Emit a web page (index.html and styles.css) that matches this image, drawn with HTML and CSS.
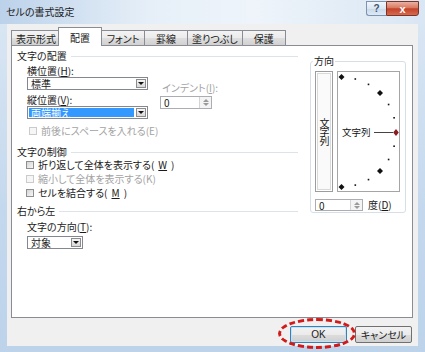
FILE: index.html
```html
<!DOCTYPE html>
<html lang="ja">
<head>
    <meta charset="UTF-8">
    <meta name="viewport" content="width=device-width, initial-scale=1.0">
    <title>セルの書式設定</title>
    <link rel="stylesheet" href="styles.css">
</head>
<body>
    <div class="window">
        <div class="titlebar">
            <span class="title">セルの書式設定</span>
            <div class="caption-buttons">
                <span class="cap-btn cap-help">?</span>
                <span class="cap-btn cap-close">x</span>
            </div>
        </div>

        <div class="client">
            <div class="tabs">
                <span class="tab">表示形式</span>
                <span class="tab active">配置</span>
                <span class="tab">フォント</span>
                <span class="tab">罫線</span>
                <span class="tab">塗りつぶし</span>
                <span class="tab">保護</span>
            </div>

            <div class="panel">
                <div class="align-col">
                    <div class="section-title">文字の配置</div>
                    <div class="align-grid">
                        <div class="align-main">
                            <div class="field-label">横位置(<u>H</u>):</div>
                            <div class="select select-wide">
                                <span class="select-value">標準</span>
                                <span class="drop-btn"></span>
                            </div>
                            <div class="field-label label-gap">縦位置(<u>V</u>):</div>
                            <div class="select select-wide focused">
                                <span class="select-value">両端揃え</span>
                                <span class="drop-btn"></span>
                            </div>
                        </div>
                        <div class="indent">
                            <div class="field-label disabled">インデント(<u>I</u>):</div>
                            <div class="spin spin-indent">
                                <span class="spin-value">0</span>
                                <span class="spin-btn"><i class="up"></i><i class="down"></i></span>
                            </div>
                        </div>
                    </div>
                    <div class="check check-space disabled"><span class="box"></span>前後にスペースを入れる(E)</div>

                    <div class="section-title section-control">文字の制御</div>
                    <div class="check check-first"><span class="box"></span>折り返して全体を表示する(<u>W</u>)</div>
                    <div class="check disabled"><span class="box"></span>縮小して全体を表示する(K)</div>
                    <div class="check"><span class="box"></span>セルを結合する(<u>M</u>)</div>

                    <div class="section-title section-rtl">右から左</div>
                    <div class="field-label label-dir">文字の方向(<u>T</u>):</div>
                    <div class="select select-short">
                        <span class="select-value">対象</span>
                        <span class="drop-btn"></span>
                    </div>
                </div>

                <div class="direction-col">
                    <fieldset class="direction">
                        <legend>方向</legend>
                        <div class="orient">
                            <div class="vertical-text">文字列</div>
                            <div class="dial">
                                <svg width="61" height="119" viewBox="0 0 61 119">
                                    <g fill="#111">
                                        <path d="M3.5 2L6.5 5L3.5 8L0.5 5Z"/>
                                        <path d="M42 18L45 21L42 24L39 21Z"/>
                                        <path d="M42 96L45 99L42 102L39 99Z"/>
                                        <path d="M3.5 112L6.5 115L3.5 118L0.5 115Z"/>
                                        <rect x="16.5" y="6.2" width="1.6" height="1.6"/>
                                        <rect x="29.7" y="11.6" width="1.6" height="1.6"/>
                                        <rect x="49.8" y="31.7" width="1.6" height="1.6"/>
                                        <rect x="55.3" y="45" width="1.6" height="1.6"/>
                                        <rect x="55.3" y="73.4" width="1.6" height="1.6"/>
                                        <rect x="49.8" y="86.7" width="1.6" height="1.6"/>
                                        <rect x="29.7" y="106.8" width="1.6" height="1.6"/>
                                        <rect x="16.5" y="112.3" width="1.6" height="1.6"/>
                                    </g>
                                    <text x="4" y="64" font-size="9.5" fill="#111">文字列</text>
                                    <line x1="36" y1="60.5" x2="55" y2="60.5" stroke="#444" stroke-width="1"/>
                                    <path d="M58 57L60.8 60.5L58 64L55.2 60.5Z" fill="#8b1c24"/>
                                </svg>
                            </div>
                        </div>
                        <div class="degree">
                            <div class="spin spin-degree">
                                <span class="spin-value">0</span>
                                <span class="spin-btn"><i class="up"></i><i class="down"></i></span>
                            </div>
                            <span>度(<u>D</u>)</span>
                        </div>
                    </fieldset>
                </div>
            </div>

            <div class="actions">
                <span class="btn btn-ok">OK<span class="ok-mark"></span></span>
                <span class="btn">キャンセル</span>
            </div>
        </div>
    </div>
</body>
</html>
```

FILE: styles.css
```css
* {
    margin: 0;
    padding: 0;
    box-sizing: border-box;
}

body {
    width: 425px;
    height: 352px;
    overflow: hidden;
    font-family: "Noto Sans CJK JP", sans-serif;
    font-size: 10px;
    line-height: 12px;
    font-feature-settings: "palt";
    color: #1a1a1a;
    background: #c6daee;
}

u {
    text-decoration: underline;
    text-underline-offset: 1px;
}

/* fenêtre */
.window {
    height: 352px;
    display: flex;
    flex-direction: column;
    background: linear-gradient(to bottom, #dbe7f4 0%, #c4d8ed 60%, #bcd3ea 100%);
}

.titlebar {
    height: 24px;
    display: flex;
    justify-content: space-between;
    align-items: flex-start;
    padding-left: 6px;
    background: linear-gradient(to right, #bcd2ea 0%, #e6eff8 35%, #eef4fa 60%, #d9e6f3 100%);
}

.title {
    line-height: 24px;
    font-size: 10px;
    color: #1b1b1b;
}

.caption-buttons {
    display: flex;
    margin-top: 1px;
    margin-right: 6px;
}

.cap-btn {
    height: 15px;
    display: flex;
    align-items: center;
    justify-content: center;
    font-family: "Liberation Sans", sans-serif;
    font-weight: bold;
}

.cap-help {
    width: 20px;
    font-size: 10px;
    color: #3d5670;
    border: 1px solid #7e93ad;
    border-right: none;
    border-radius: 0 0 0 3px;
    background: linear-gradient(#f1f6fc 0%, #dbe6f2 50%, #c8d9eb 51%, #dde9f5 100%);
}

.cap-close {
    width: 33px;
    font-size: 11px;
    color: #fff;
    border: 1px solid #7a3428;
    border-radius: 0 0 3px 0;
    background: linear-gradient(#eab0a2 0%, #d9785f 45%, #c3422a 52%, #d66b4e 100%);
}

.client {
    flex: 1;
    margin: 0 7px 6px;
    padding: 3px 5px 0 4px;
    background: #f0f0f0;
}

/* onglets */
.tabs {
    height: 18px;
    display: flex;
    align-items: flex-end;
}

.tab {
    height: 15px;
    min-width: 44px;
    padding: 2px 4px 0;
    margin-right: -1px;
    text-align: center;
    border: 1px solid #898c95;
    border-bottom: none;
    background: linear-gradient(#f3f3f3 0%, #ebebeb 50%, #dedede 51%, #d1d1d1 100%);
}

.tab.active {
    height: 19px;
    margin: 0 -1px -1px -2px;
    padding-top: 4px;
    position: relative;
    z-index: 1;
    background: #fff;
}

.panel {
    height: 273px;
    display: flex;
    gap: 8px;
    padding: 4px 6px 0 5px;
    background: #fff;
    border: 1px solid #898c95;
}

.align-col {
    flex: 1;
}

.section-title {
    display: flex;
    align-items: center;
    gap: 4px;
}

.section-title::after {
    content: "";
    flex: 1;
    height: 1px;
    margin-right: 4px;
    background: #dde3ea;
}

.section-control {
    margin-top: 9px;
}

.section-rtl {
    margin-top: 6px;
}

.align-grid {
    display: flex;
    margin-top: 3px;
    padding-left: 10px;
}

.label-gap {
    margin-top: 4px;
}

.label-dir {
    margin-top: 4px;
    padding-left: 10px;
}

.disabled {
    color: #a3a3a3;
}

.indent {
    margin-left: 12px;
    padding-top: 17px;
}

.indent .field-label {
    padding-left: 2px;
}

/* listes déroulantes */
.select {
    height: 13px;
    display: flex;
    border: 1px solid #828790;
    background: #fff;
}

.select-wide {
    width: 121px;
}

.select-short {
    width: 56px;
    margin: 3px 0 0 10px;
}

.select-value {
    flex: 1;
    padding-left: 3px;
    line-height: 11px;
}

.select.focused .select-value {
    margin: 1px;
    padding-left: 2px;
    line-height: 9px;
    background: #3399ff;
    color: #fff;
}

.drop-btn {
    width: 10px;
    margin: 1px;
    border: 1px solid #8c8c8c;
    background: linear-gradient(#f5f5f5, #d8d8d8);
    display: flex;
    align-items: center;
    justify-content: center;
}

.drop-btn::after {
    content: "";
    border-left: 3px solid transparent;
    border-right: 3px solid transparent;
    border-top: 3px solid #111;
}

/* zones numériques */
.spin {
    height: 13px;
    display: flex;
    border: 1px solid #abadb3;
    background: #fff;
}

.spin-indent {
    width: 52px;
    margin-top: 2px;
}

.spin-degree {
    width: 48px;
    height: 12px;
}

.spin-value {
    flex: 1;
    padding-left: 3px;
    line-height: 11px;
}

.spin-btn {
    width: 12px;
    display: flex;
    flex-direction: column;
    align-items: center;
    justify-content: center;
    gap: 1px;
    border-left: 1px solid #d4d4d4;
    background: #f4f4f4;
}

.spin-btn i {
    border-left: 3px solid transparent;
    border-right: 3px solid transparent;
}

.spin-btn .up {
    border-bottom: 3px solid #9a9a9a;
}

.spin-btn .down {
    border-top: 3px solid #9a9a9a;
}

/* cases à cocher */
.check {
    height: 12px;
    display: flex;
    align-items: center;
    gap: 4px;
    margin-top: 2px;
    margin-left: 9px;
}

.check-space {
    margin-top: 6px;
    margin-left: 12px;
}

.check-first {
    margin-top: 1px;
}

.box {
    width: 8px;
    height: 8px;
    border: 1px solid #8f8f8f;
    background: linear-gradient(135deg, #d4d4d4, #f7f7f7);
}

.check.disabled .box {
    border-color: #cbcbcb;
    background: #f6f6f6;
}

/* orientation */
.direction-col {
    width: 96px;
    padding-top: 5px;
}

.direction {
    border: 1px solid #d5dfe5;
    border-radius: 3px;
    padding: 0 4px 0;
}

.direction legend {
    margin-left: -2px;
    padding: 0 1px;
    line-height: 12px;
}

.orient {
    display: flex;
    gap: 4px;
    margin-top: 4px;
    height: 121px;
}

.vertical-text {
    width: 18px;
    writing-mode: vertical-rl;
    text-orientation: upright;
    display: flex;
    align-items: center;
    justify-content: center;
    letter-spacing: -1px;
    border: 1px solid #9c9c9c;
    box-shadow: inset 0 0 0 1px #fff, inset 0 0 0 2px #d9d9d9;
    background: #fafafa;
}

.dial {
    width: 63px;
    border: 1px solid #a5a5a5;
    background: #fff;
}

.dial svg {
    display: block;
}

.degree {
    display: flex;
    align-items: center;
    gap: 5px;
    margin: 7px 0 1px;
}

/* boutons */
.actions {
    display: flex;
    justify-content: flex-end;
    gap: 8px;
    margin-top: 8px;
    padding-right: 1px;
}

.btn {
    width: 57px;
    height: 17px;
    display: flex;
    align-items: center;
    justify-content: center;
    border: 1px solid #707070;
    border-radius: 2px;
    background: linear-gradient(#f2f2f2 0%, #ebebeb 50%, #dddddd 51%, #cfcfcf 100%);
}

.btn-ok {
    position: relative;
    font-family: "Liberation Sans", sans-serif;
    border-color: #3c7fb1;
    box-shadow: inset 0 0 0 1px #bfe4f8;
}

.ok-mark {
    position: absolute;
    left: -13px;
    top: -9px;
    width: 78px;
    height: 31px;
    border: 3px dashed #d11a1a;
    border-radius: 50%;
}
```
